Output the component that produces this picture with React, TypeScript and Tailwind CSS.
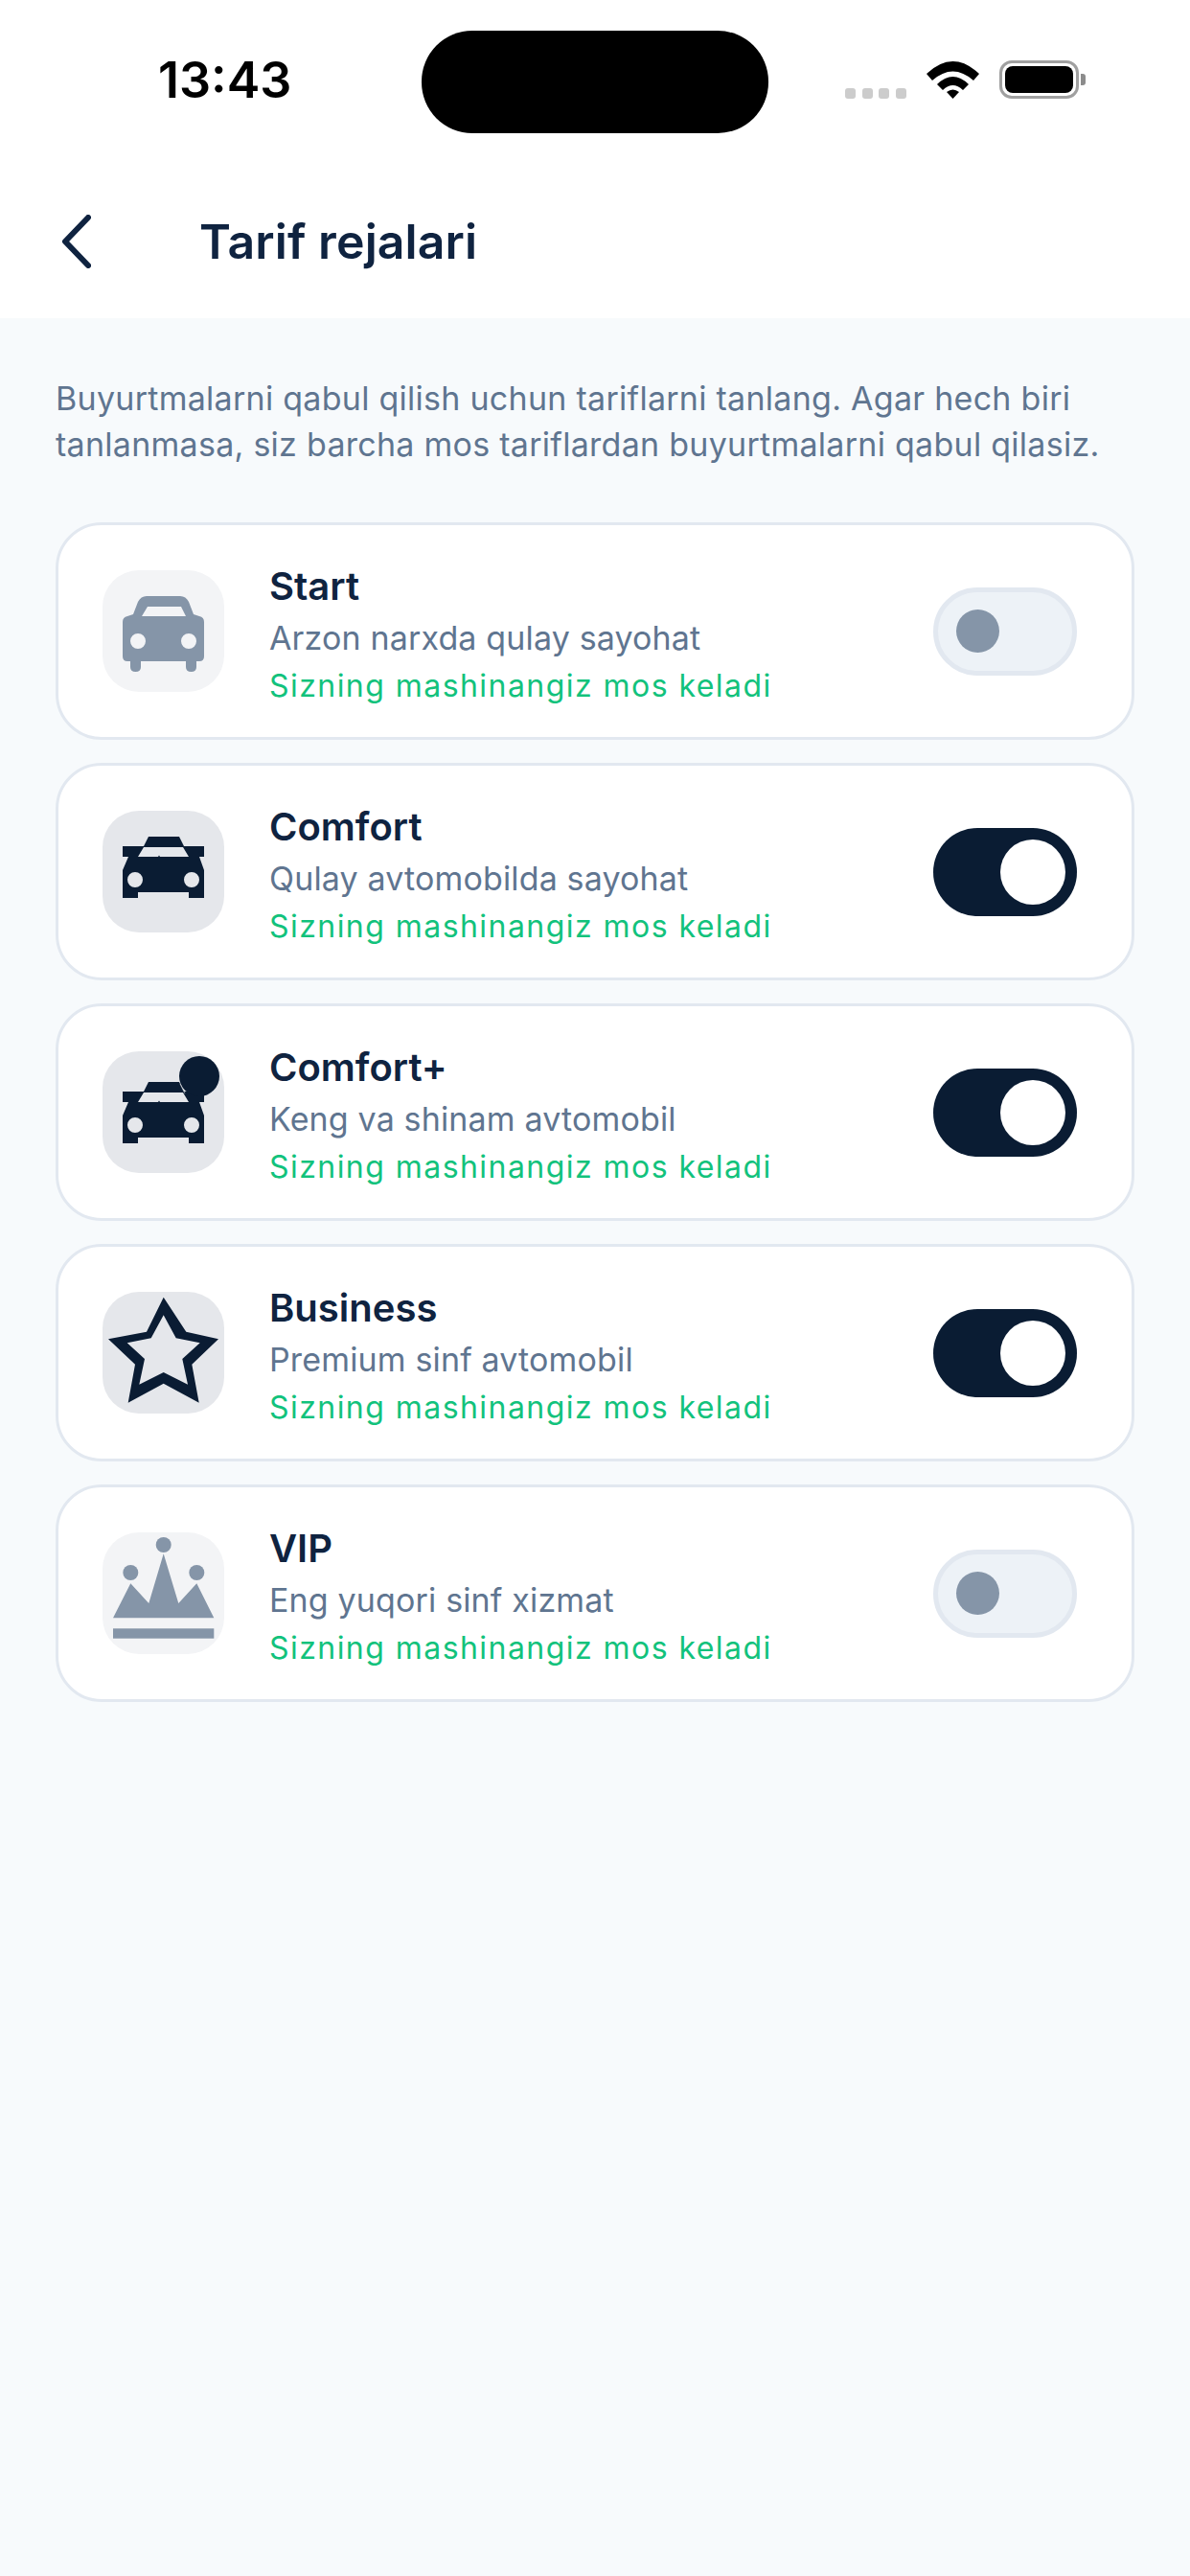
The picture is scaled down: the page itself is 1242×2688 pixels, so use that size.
import React from 'react';

type Plan = {
  name: string;
  desc: string;
  on: boolean;
  icon: React.ReactNode;
};

const DARK = '#0a1c33';
const MUTED = '#8595a8';

const StartCar = () => (
  <path
    fill={MUTED}
    fillRule="evenodd"
    d="M46 27H81Q87 27 90 33L95 46L101 48Q106 49 106 54V90Q106 95 101 95H98V101Q98 106 92.5 106Q87 106 87 101V95H40V101Q40 106 34.5 106Q29 106 29 101V95H26Q21 95 21 90V54Q21 49 26 48L32 46L37 33Q40 27 46 27ZM47 38L41 48H87L82 38ZM37 66A8 8 0 1 0 37 82A8 8 0 1 0 37 66ZM90 66A8 8 0 1 0 90 82A8 8 0 1 0 90 66Z"
  />
);

const TaxiCar = ({ y = 0 }: { y?: number }) => (
  <g transform={`translate(0 ${y})`} fill={DARK}>
    <path d="M48 27H80L85 37H43Z" />
    <path
      fillRule="evenodd"
      d="M21 37H106V48H101L106 62V91H90V85H37V91H21V62L27 48H21ZM43 38L37 48H90L84 38ZM34 64A8 8 0 1 0 34 80A8 8 0 1 0 34 64ZM93 64A8 8 0 1 0 93 80A8 8 0 1 0 93 64Z"
    />
    <path d="M58 48L59 46.5L60 48Z" />
  </g>
);

const plans: Plan[] = [
  { name: 'Start', desc: 'Arzon narxda qulay sayohat', on: false, icon: <StartCar /> },
  { name: 'Comfort', desc: 'Qulay avtomobilda sayohat', on: true, icon: <TaxiCar /> },
  {
    name: 'Comfort+',
    desc: 'Keng va shinam avtomobil',
    on: true,
    icon: (
      <>
        <TaxiCar y={5} />
        <circle cx="101" cy="26" r="21" fill={DARK} />
        <path d="M81 34L86 44" stroke="#e5e7eb" strokeWidth="0.6" />
      </>
    ),
  },
  {
    name: 'Business',
    desc: 'Premium sinf avtomobil',
    on: true,
    icon: (
      <path
        fill={DARK}
        fillRule="evenodd"
        d="M63.7 5.7L87.3 41.7L121 49.3L93.3 75.7L100.7 115.7L63.7 95.7L26.7 115.7L34 75.7L6 49.3L46 41.7ZM63.7 24.3L50.7 48.3L25.7 53.3L44 70L38.3 96.7L63.7 84L89 96.7L83.3 70L101.7 53.3L76.7 48.3Z"
      />
    ),
  },
  {
    name: 'VIP',
    desc: 'Eng yuqori sinf xizmat',
    on: false,
    icon: (
      <g fill={MUTED}>
        <circle cx="63.7" cy="13" r="8" />
        <circle cx="29.3" cy="42" r="8" />
        <circle cx="98.3" cy="42" r="8" />
        <path d="M11 89.3L29.3 53.3L48.3 74L63.7 22.3L79.3 74L98.3 53.3L116.3 89.3Z" />
        <rect x="11" y="100.3" width="105.3" height="10.4" />
      </g>
    ),
  },
];

const StatusBar = () => (
  <div className="flex h-[172px] items-start pl-[165px]">
    <span className="mt-[54px] w-[275px] text-[52px] leading-[60px] font-semibold text-black">13:43</span>
    <div className="mt-[32px] h-[107px] w-[362px] rounded-[53px] bg-black" />
    <div className="mt-[92px] ml-[80px] flex w-[85px] gap-[6.5px]">
      <span className="h-[11px] w-[11px] rounded-[3px] bg-[#cccccc]" />
      <span className="h-[11px] w-[11px] rounded-[3px] bg-[#cccccc]" />
      <span className="h-[11px] w-[11px] rounded-[3px] bg-[#cccccc]" />
      <span className="h-[11px] w-[11px] rounded-[3px] bg-[#cccccc]" />
    </div>
    <svg viewBox="0 0 55 40" className="mt-[63px] h-[40px] w-[55px]">
      <path d="M0 14Q27.5 -12 55 14L49 21Q27.5 2 6 21Z" />
      <path d="M11 25Q27.5 9 44 25L38 31Q27.5 21 17 31Z" />
      <path d="M21 33Q27.5 28 34 33L27.5 40Z" />
    </svg>
    <div className="mt-[63px] ml-[21px] flex items-center">
      <div className="flex h-[40px] w-[83px] rounded-[13px] border-[3px] border-[#a0a0a0] p-[3px]">
        <div className="flex-1 rounded-[8px] bg-black" />
      </div>
      <div className="ml-[2px] h-[12px] w-[5px] rounded-r-[3px] bg-[#8c8c8c]" />
    </div>
  </div>
);

const Toggle = ({ on }: { on: boolean }) =>
  on ? (
    <div className="flex h-[92px] w-[150px] items-center justify-end rounded-full bg-[#0a1c33] pr-[12px]">
      <div className="h-[68px] w-[68px] rounded-full bg-white" />
    </div>
  ) : (
    <div className="flex h-[92px] w-[150px] items-center rounded-full border-[5px] border-[#e2e8f0] bg-[#edf2f7] pl-[19px]">
      <div className="h-[45px] w-[45px] rounded-full bg-[#8595a8]" />
    </div>
  );

const PlanCard = ({ plan }: { plan: Plan }) => (
  <div className="flex h-[227px] items-center rounded-[48px] border-[3px] border-[#e2e8f0] bg-white pr-[57px] pl-[46px]">
    <div className={`h-[127px] w-[127px] shrink-0 rounded-[38px] ${plan.on ? 'bg-[#e5e7eb]' : 'bg-[#f3f4f6]'}`}>
      <svg viewBox="0 0 127 127" className="h-[127px] w-[127px]">
        {plan.icon}
      </svg>
    </div>
    <div className="ml-[47px] flex-1 pt-[10px]">
      <div className="text-[40px] leading-[50px] font-[580] text-[#0f2340]">{plan.name}</div>
      <div className="mt-[4px] text-[34px] leading-[50px] tracking-[0.15px] text-[#5f7590]">{plan.desc}</div>
      <div className="text-[32px] leading-[50px] tracking-[1.45px] text-[#12c27c]">Sizning mashinangiz mos keladi</div>
    </div>
    <Toggle on={plan.on} />
  </div>
);

export default function App() {
  return (
    <div className="flex min-h-[2688px] flex-col bg-[#f7fafc] font-['Inter',sans-serif]">
      <header className="bg-white">
        <StatusBar />
        <div className="flex h-[160px] items-center pl-[63px]">
          <svg viewBox="0 0 32 56" className="h-[56px] w-[32px]" fill="none">
            <path d="M29 3L5 28L29 53" stroke="#0f2340" strokeWidth="6" strokeLinecap="round" strokeLinejoin="round" />
          </svg>
          <h1 className="ml-[113px] text-[50px] font-[580] tracking-[0.1px] text-[#0f2340]">Tarif rejalari</h1>
        </div>
      </header>
      <main className="px-[58px] pt-[60px]">
        <p className="mb-[57px] text-[34px] leading-[48px] tracking-[0.27px] text-[#5f7590]">
          Buyurtmalarni qabul qilish uchun tariflarni tanlang. Agar hech biri tanlanmasa, siz barcha mos tariflardan buyurtmalarni qabul qilasiz.
        </p>
        <div className="flex flex-col gap-[24px]">
          {plans.map((plan) => (
            <PlanCard key={plan.name} plan={plan} />
          ))}
        </div>
      </main>
    </div>
  );
}
